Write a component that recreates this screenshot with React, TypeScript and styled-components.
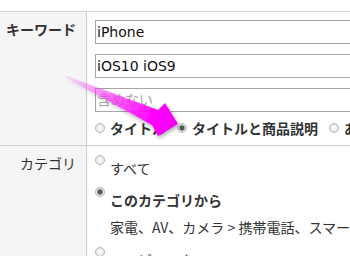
import React from "react";
import styled, { createGlobalStyle } from "styled-components";

const Global = createGlobalStyle`
  html, body { margin: 0; padding: 0; background: #fff; overflow: hidden; }
  body { font-family: "Noto Sans CJK JP", "Noto Sans", sans-serif; color: #333; }
`;

const Page = styled.div`
  position: relative;
  width: 350px;
  height: 256px;
  overflow: hidden;
  padding-top: 11px;
  box-sizing: border-box;
`;

const Table = styled.div`
  border-top: 1px solid #d4d4d4;
`;

const Row = styled.div`
  display: grid;
  grid-template-columns: 87px 1fr;
  border-bottom: 1px solid #cfcfcf;
`;

const Label = styled.div<{ $bold?: boolean; $pt: number }>`
  background: #f5f5f5;
  border-right: 1px solid #cfcfcf;
  box-sizing: border-box;
  text-align: right;
  padding: ${(p) => p.$pt}px 10px 0 0;
  font-size: 14px;
  line-height: 20px;
  font-weight: ${(p) => (p.$bold ? 700 : 400)};
  color: #333;
  white-space: nowrap;
`;

const Cell = styled.div<{ $pt: number; $pb: number }>`
  padding: ${(p) => p.$pt}px 0 ${(p) => p.$pb}px 8px;
  overflow: hidden;
`;

const Inputs = styled.div`
  display: flex;
  flex-direction: column;
  gap: 10px;
`;

const TextInput = styled.input`
  width: 300px;
  height: 24px;
  box-sizing: border-box;
  border: 1px solid #a6a6a6;
  padding: 0 0 0 1px;
  margin: 0;
  font-family: "DejaVu Sans", Verdana, sans-serif;
  font-size: 14px;
  color: #111;
  background: #fff;
  outline: none;
  &::placeholder { color: #a8a8a8; font-family: "Noto Sans CJK JP", sans-serif; font-size: 14px; }
`;

const RadioRow = styled.div`
  display: flex;
  align-items: center;
  margin-top: 7px;
  white-space: nowrap;
  height: 18px;
`;

const Radio = styled.span<{ $on?: boolean }>`
  flex: none;
  display: inline-block;
  width: 10px;
  height: 10px;
  box-sizing: border-box;
  border-radius: 50%;
  border: 1px solid #b5b5b5;
  background: ${(p) =>
    p.$on
      ? "radial-gradient(circle, #555 0 2px, #999 2.6px, #e6e6e6 3.2px, #f7f7f7 100%)"
      : "radial-gradient(circle at 50% 35%, #fdfdfd 0, #e2e2e2 100%)"};
  box-shadow: inset 0 1px 1px rgba(0,0,0,0.08);
  margin-right: 5px;
`;

const InlineOption = styled.span`
  display: inline-flex;
  align-items: center;
  margin-right: 11px;
  font-size: 14px;
  line-height: 18px;
  font-weight: 700;
  color: #333;
`;

const OptionList = styled.div`
  display: flex;
  flex-direction: column;
`;

const Option = styled.div<{ $mt: number }>`
  display: flex;
  align-items: flex-start;
  margin-top: ${(p) => p.$mt}px;
  white-space: nowrap;
  & > ${Radio} { margin-top: -3px; }
`;

const OptionText = styled.div`
  display: flex;
  flex-direction: column;
  gap: 7px;
`;

const Line = styled.span<{ $bold?: boolean }>`
  font-size: 14px;
  line-height: 20px;
  font-weight: ${(p) => (p.$bold ? 700 : 400)};
  color: #333;
`;

const Overlay = styled.svg`
  position: absolute;
  left: 0;
  top: 0;
  pointer-events: none;
`;

export default function App() {
  return (
    <Page>
      <Global />
      <Table>
        <Row>
          <Label $bold $pt={7}>キーワード</Label>
          <Cell $pt={8} $pb={8}>
            <Inputs>
              <TextInput defaultValue="iPhone" />
              <TextInput defaultValue="iOS10 iOS9" />
              <TextInput placeholder="含めない" />
            </Inputs>
            <RadioRow>
              <InlineOption><Radio />タイトル</InlineOption>
              <InlineOption><Radio $on />タイトルと商品説明</InlineOption>
              <InlineOption><Radio />あいまい</InlineOption>
            </RadioRow>
          </Cell>
        </Row>
        <Row>
          <Label $pt={7}>カテゴリ</Label>
          <Cell $pt={12} $pb={0}>
            <OptionList>
              <Option $mt={0}>
                <Radio />
                <OptionText><Line>すべて</Line></OptionText>
              </Option>
              <Option $mt={12}>
                <Radio $on />
                <OptionText>
                  <Line $bold>このカテゴリから</Line>
                  <Line>家電、AV、カメラ &gt; 携帯電話、スマートフォン</Line>
                </OptionText>
              </Option>
              <Option $mt={13}>
                <Radio />
                <OptionText><Line>コンピュータ</Line></OptionText>
              </Option>
            </OptionList>
          </Cell>
        </Row>
      </Table>
      <Overlay width="350" height="256" viewBox="0 0 350 256">
        <defs>
          <linearGradient id="ag" x1="64" y1="76" x2="178" y2="124" gradientUnits="userSpaceOnUse">
            <stop offset="0" stopColor="#ff66ff" stopOpacity="0.15" />
            <stop offset="0.45" stopColor="#ff33ff" stopOpacity="0.7" />
            <stop offset="0.8" stopColor="#ff00ff" stopOpacity="1" />
            <stop offset="1" stopColor="#f000f0" stopOpacity="1" />
          </linearGradient>
          <filter id="sh" x="-20%" y="-20%" width="140%" height="160%">
            <feGaussianBlur in="SourceAlpha" stdDeviation="2" />
            <feOffset dx="1" dy="2" result="b" />
            <feComponentTransfer><feFuncA type="linear" slope="0.35" /></feComponentTransfer>
            <feMerge><feMergeNode /><feMergeNode in="SourceGraphic" /></feMerge>
          </filter>
        </defs>
        <polygon
          points="64,75 158,110 165,103 178,124 158,136 152,125 66,78"
          fill="url(#ag)"
          filter="url(#sh)"
        />
      </Overlay>
    </Page>
  );
}
